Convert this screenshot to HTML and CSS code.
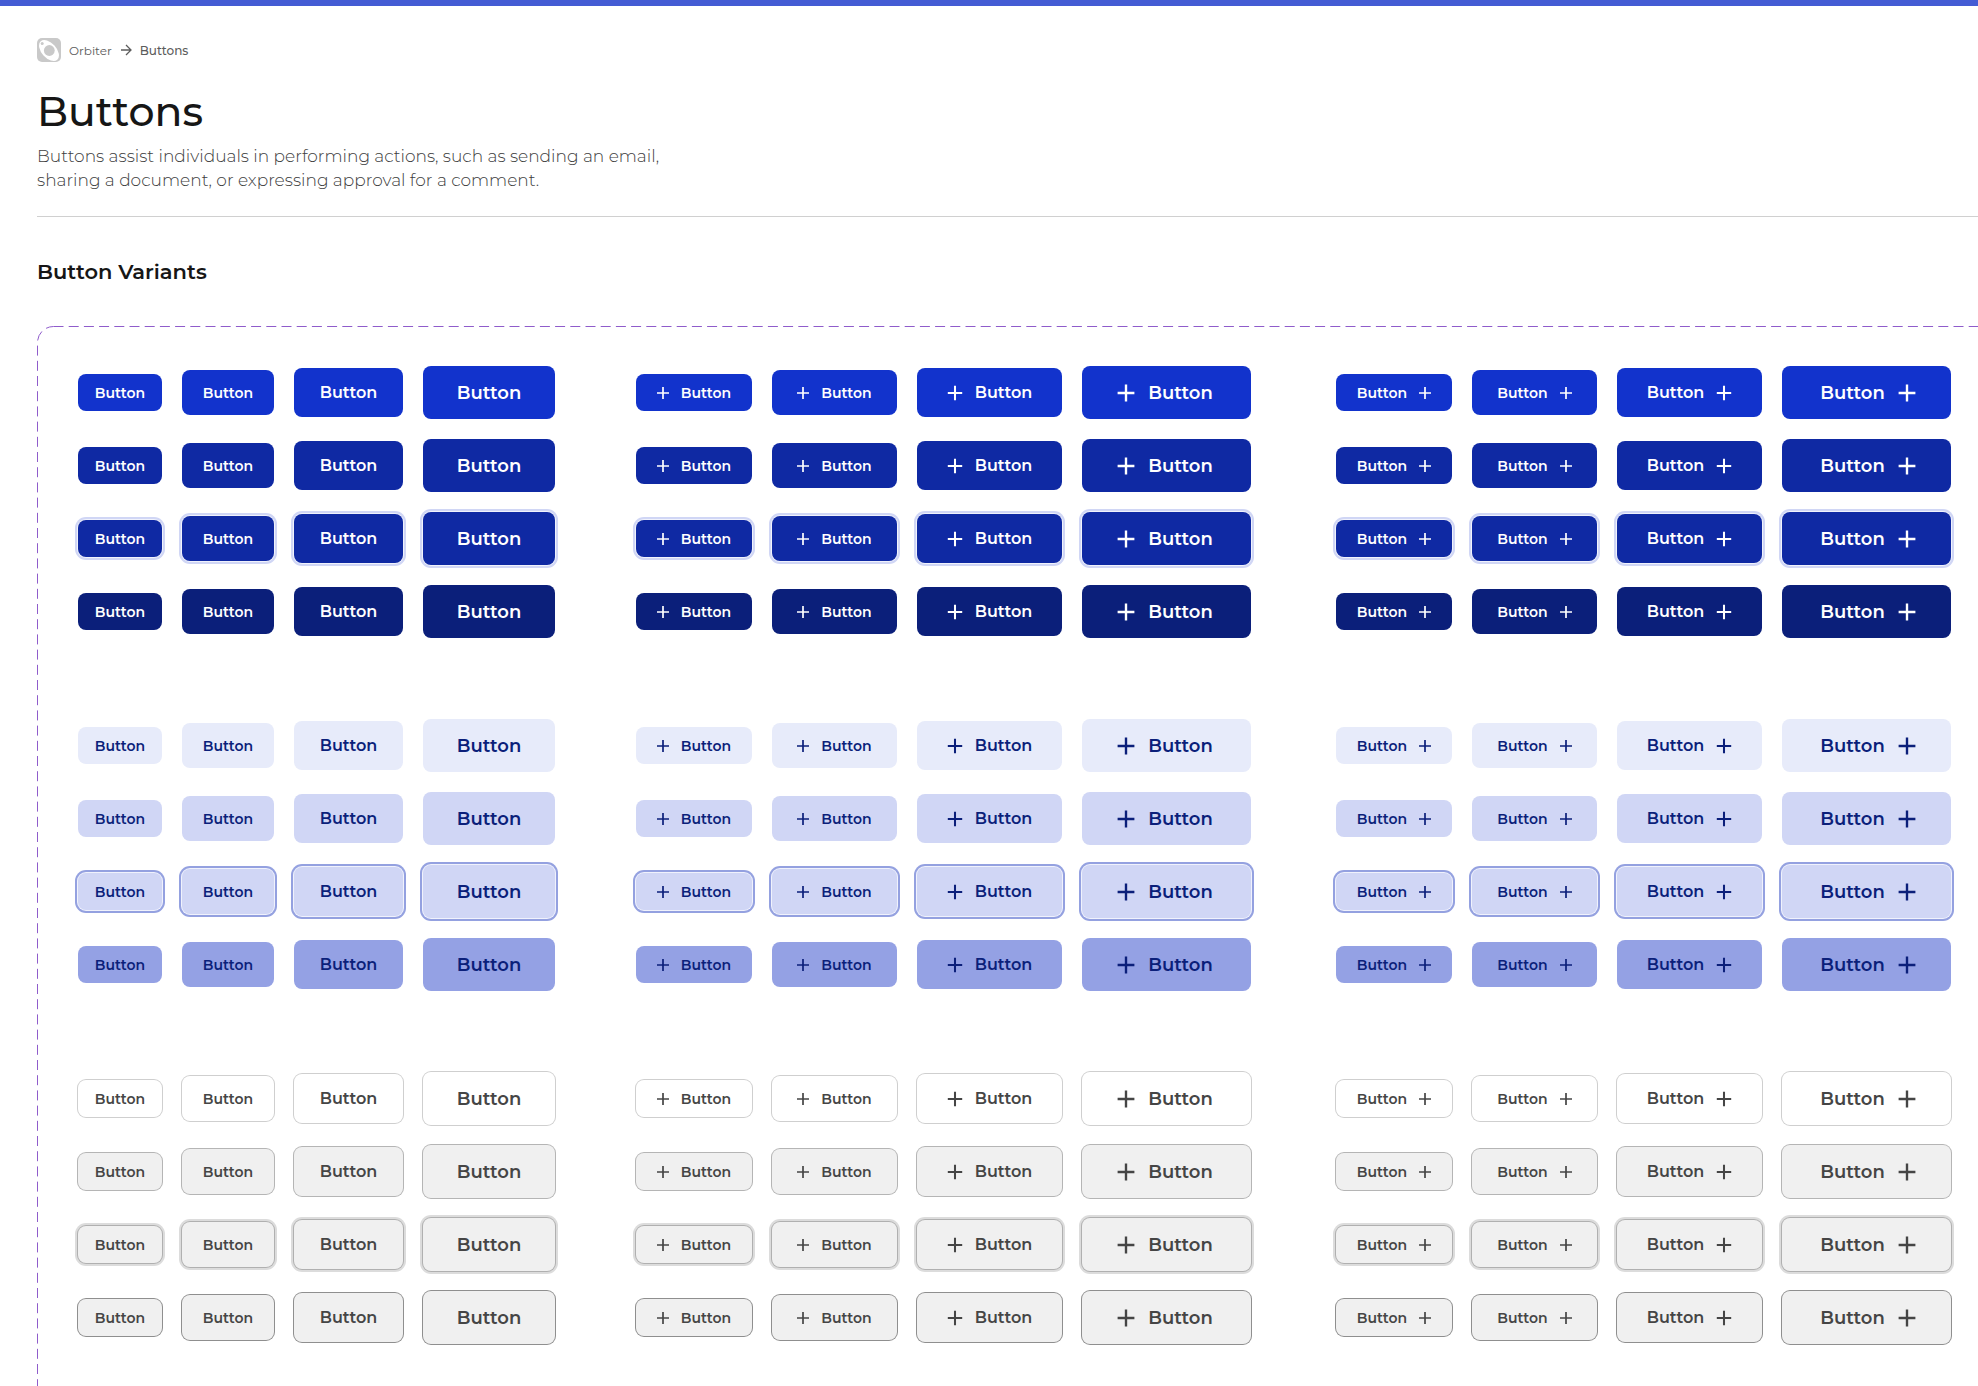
FILE: index.html
```html
<!DOCTYPE html>
<html lang="en">
<head>
<meta charset="utf-8">
<meta name="viewport" content="width=device-width, initial-scale=1">
<title>Orbiter – Buttons</title>
<link rel="stylesheet" href="styles.css">
</head>
<body>
<header class="header">
  <nav class="crumbs" aria-label="Breadcrumb">
    <svg class="logo" viewBox="0 0 24 24" aria-hidden="true">
      <rect width="24" height="24" rx="5" fill="#c9c9c9"/>
      <ellipse cx="12" cy="12.500" rx="12.400" ry="7.400" transform="rotate(48 12 12.500)" fill="#fff"/>
      <circle cx="12.300" cy="12.500" r="5.400" fill="#c9c9c9"/>
      <circle cx="5.200" cy="5.600" r="1.500" fill="#c9c9c9"/>
    </svg>
    <a class="crumb" href="#">Orbiter</a>
    <svg class="arrow" viewBox="0 0 12 12" aria-hidden="true"><path d="M1 6h10M6 1l5 5l-5 5" fill="none" stroke="currentColor" stroke-width="1.300"/></svg>
    <a class="crumb crumb-current" href="#" aria-current="page">Buttons</a>
  </nav>
  <h1 class="title">Buttons</h1>
  <p class="lead">Buttons assist individuals in performing actions, such as sending an email,<br>sharing a document, or expressing approval for a comment.</p>
</header>
<main class="main">
  <h2 class="subtitle">Button Variants</h2>
  <section class="panel">
    <svg class="panel-frame" aria-hidden="true"><rect x="0.5" y="0.5" width="110%" height="110%" rx="16"/></svg>
    <div class="matrix" id="matrix"></div>
  </section>
</main>
<template id="plus">
  <svg class="icon" viewBox="0 0 20 20" aria-hidden="true"><path d="M10 4v12M4 10h12" fill="none" stroke="currentColor" stroke-width="1.700"/></svg>
</template>
<script src="script.js"></script>
</body>
</html>
```
FILE: styles.css
```css
* { box-sizing: border-box; }

body {
  margin: 0;
  min-height: 100vh;
  display: flex;
  flex-direction: column;
  border-top: 6px solid #445cd4;
  background: #fff;
  color: #161616;
  font-family: Montserrat, Inter, "Liberation Sans", sans-serif;
  overflow: hidden;
}

.header {
  margin-left: 37px;
  padding: 32px 0 24px;
  border-bottom: 1px solid #d0d0d0;
}

.crumbs {
  display: flex;
  align-items: center;
  height: 24px;
  color: #5c5c5c;
  font-size: 12px;
}

.logo { width: 24px; height: 24px; margin-right: 8px; }
.arrow { width: 12px; height: 12px; margin: 0 8px; }
.crumb { color: inherit; text-decoration: none; }
.crumb-current { font-weight: 500; }

.title {
  margin: 24px 0 8px;
  font-size: 41px;
  font-weight: 500;
  line-height: 50px;
}

.lead {
  margin: 0;
  color: #404040;
  font-size: 17px;
  font-weight: 300;
  line-height: 24px;
}

.main {
  flex: 1;
  display: flex;
  flex-direction: column;
  margin-left: 37px;
}

.subtitle {
  margin: 40px 0;
  font-size: 21px;
  font-weight: 600;
  line-height: 29px;
}

.panel {
  flex: 1;
  position: relative;
  padding: 40px 0 40px 41px;
}

.panel-frame {
  position: absolute;
  inset: 0;
  width: 100%;
  height: 100%;
}

.panel-frame rect {
  fill: none;
  stroke: #8f5ccb;
  stroke-width: 1px;
  stroke-dasharray: 10 5.2;
}

.matrix {
  position: relative;
  display: grid;
  grid-template-columns: 478px 620px 616px;
  gap: 81px 80px;
}

.set { display: grid; gap: 20px; }

.row {
  display: flex;
  align-items: center;
  gap: 20px;
  height: 53px;
}

.btn {
  flex: none;
  display: flex;
  align-items: center;
  justify-content: center;
  gap: 8px;
  padding: 0;
  border: 0;
  border-radius: 8px;
  font-family: inherit;
  font-weight: 600;
  line-height: 20px;
  cursor: pointer;
}

.icon { width: 20px; height: 20px; }

.sm { width: 84px; height: 37px; font-size: 14px; }
.md { width: 92px; height: 45px; font-size: 14px; }
.lg { width: 109px; height: 49px; font-size: 16px; }
.xl { width: 132px; height: 53px; font-size: 18px; }

.left .btn { padding-right: 4px; }
.right .btn { padding-left: 4px; }
.left .xl { padding-right: 8px; }
.right .xl { padding-left: 8px; }
.left .sm, .right .sm { width: 116px; }
.left .md, .right .md { width: 125px; }
.left .lg, .right .lg { width: 145px; }
.left .xl, .right .xl { width: 169px; }
.lg .icon { width: 24px; height: 24px; }
.xl .icon { width: 28px; height: 28px; }

.primary { background: #1233cc; color: #fff; }
.primary.hover, .primary.focus { background: #0f29a3; }
.primary.focus { box-shadow: 0 0 0 1px #f0f2fc, 0 0 0 3px #d0d6f5; }
.primary.pressed { background: #0b1f7a; }

.secondary { background: #e7ebfa; color: #0b1f7a; }
.secondary.hover, .secondary.focus { background: #d0d6f5; }
.secondary.focus { box-shadow: 0 0 0 1px #f0f2fc, 0 0 0 3px #94a1e0; }
.secondary.pressed { background: #94a1e4; }

.tertiary { background: #fff; color: #454545; box-shadow: 0 0 0 1px #cfcfcf; }
.tertiary.hover { background: #f0f0f0; box-shadow: 0 0 0 1px #b5b5b5; }
.tertiary.focus { background: #f0f0f0; box-shadow: 0 0 0 1px #b0b0b0, 0 0 0 3px #dcdcdc; }
.tertiary.pressed { background: #f0f0f0; box-shadow: 0 0 0 1px #8f8f8f; }
```
FILE: script.js
```js
const matrix = document.getElementById("matrix");
const plus = document.getElementById("plus");

for (const variant of ["primary", "secondary", "tertiary"]) {
  for (const icon of ["plain", "left", "right"]) {
    const set = document.createElement("div");
    set.className = `set ${icon}`;
    for (const state of ["rest", "hover", "focus", "pressed"]) {
      const row = document.createElement("div");
      row.className = "row";
      for (const size of ["sm", "md", "lg", "xl"]) {
        const button = document.createElement("button");
        button.type = "button";
        button.className = `btn ${variant} ${state} ${size}`;
        const label = document.createElement("span");
        label.textContent = "Button";
        button.append(label);
        if (icon === "left") button.prepend(plus.content.cloneNode(true));
        if (icon === "right") button.append(plus.content.cloneNode(true));
        row.append(button);
      }
      set.append(row);
    }
    matrix.append(set);
  }
}
```
